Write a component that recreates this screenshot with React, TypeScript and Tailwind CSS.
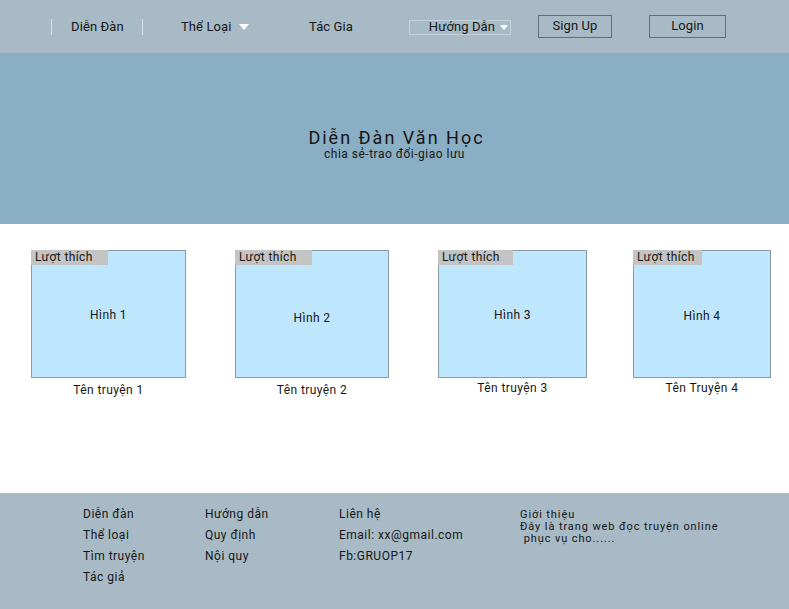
const font = { fontFamily: "Roboto, 'Noto Sans', Arial, sans-serif" };

const stories = [
  { img: "Hình 1", title: "Tên truyện 1", w: 155, ml: 31, label: 77, imgY: "pt-[41px]", titleY: "mt-[3px]" },
  { img: "Hình 2", title: "Tên truyện 2", w: 154, ml: 49, label: 77, imgY: "pt-[44px]", titleY: "mt-[3px]" },
  { img: "Hình 3", title: "Tên truyện 3", w: 149, ml: 49, label: 75, imgY: "pt-[41px]", titleY: "mt-[1px]" },
  { img: "Hình 4", title: "Tên Truyện 4", w: 138, ml: 46, label: 69, imgY: "pt-[42px]", titleY: "mt-[1px]" },
];

function Caret({ w, h }: { w: number; h: number }) {
  return (
    <svg width={w} height={h} viewBox={`0 0 ${w} ${h}`} className="inline-block">
      <path d={`M0 0 L${w} 0 L${w / 2} ${h} Z`} fill="#ffffff" />
    </svg>
  );
}

export default function App() {
  return (
    <div className="w-[789px] h-[609px] flex flex-col bg-white text-[#161616] overflow-hidden" style={font}>
      {/* header */}
      <div className="h-[53px] bg-[#a8bac5] flex items-center text-[13px] tracking-[0.1px] whitespace-nowrap shrink-0">
        <div className="ml-[51px] w-px h-[16px] bg-[#d3dde3] shrink-0" />
        <span className="ml-[19px] w-[52px] shrink-0">Diễn Đàn</span>
        <div className="ml-[19px] w-px h-[16px] bg-[#d3dde3] shrink-0" />
        <span className="ml-[38px] w-[52px] shrink-0">Thể Loại</span>
        <span className="ml-[6px] flex items-center"><Caret w={10} h={6} /></span>
        <span className="ml-[60px] w-[44px] shrink-0">Tác Gia</span>
        <div className="ml-[56px] w-[102px] h-[15px] border border-[#c5d1d8] flex items-center justify-end pr-[2px] gap-[5px] mt-[1px] shrink-0">
          <span>Hướng Dẫn</span>
          <Caret w={8} h={5} />
        </div>
        <button className="ml-[27px] w-[74px] h-[23px] border border-[#5f6e78] flex items-center justify-center mb-[1px] shrink-0">
          Sign Up
        </button>
        <button className="ml-[37px] w-[77px] h-[23px] border border-[#5f6e78] flex items-center justify-center mb-[1px] shrink-0">
          Login
        </button>
      </div>

      {/* hero */}
      <div className="h-[171px] bg-[#8aaec4] flex flex-col items-center justify-center pt-[12px] shrink-0">
        <div className="text-[18px] leading-[20px] tracking-[2px] ml-[4px]">Diễn Đàn Văn Học</div>
        <div className="text-[12px] leading-[13px] tracking-[0.5px]">chia sẻ-trao đổi-giao lưu</div>
      </div>

      {/* stories */}
      <div className="h-[269px] flex items-start pt-[26px] shrink-0 text-[12px] tracking-[0.4px]">
        {stories.map((s) => (
          <div key={s.img} className="flex flex-col items-center" style={{ width: s.w, marginLeft: s.ml }}>
            <div className="w-full h-[128px] bg-[#bee6fd] border border-[#8b9ba6] flex flex-col">
              <div className="h-[15px] bg-[#c4c4c4] leading-[15px] pl-[4px] -mt-px -ml-px" style={{ width: s.label }}>
                Lượt thích
              </div>
              <div className={`text-center ${s.imgY}`}>{s.img}</div>
            </div>
            <div className={s.titleY}>{s.title}</div>
          </div>
        ))}
      </div>

      {/* footer */}
      <div className="flex-1 bg-[#a8bac5] flex text-[12px] tracking-[0.5px] pt-[15px]">
        <div className="ml-[83px] w-[122px] flex flex-col gap-[8px] leading-[13px]">
          <span>Diễn đàn</span>
          <span>Thể loại</span>
          <span>Tìm truyện</span>
          <span>Tác giả</span>
        </div>
        <div className="w-[134px] flex flex-col gap-[8px] leading-[13px]">
          <span>Hướng dẫn</span>
          <span>Quy định</span>
          <span>Nội quy</span>
        </div>
        <div className="w-[181px] flex flex-col gap-[8px] leading-[13px]">
          <span>Liên hệ</span>
          <span>Email: xx@gmail.com</span>
          <span>Fb:GRUOP17</span>
        </div>
        <div className="flex flex-col text-[11px] tracking-[0.9px] leading-[12px] pt-[1px]">
          <span>Giới thiệu</span>
          <span>Đây là trang web đọc truyện online</span>
          <span>&nbsp;phục vụ cho......</span>
        </div>
      </div>
    </div>
  );
}
